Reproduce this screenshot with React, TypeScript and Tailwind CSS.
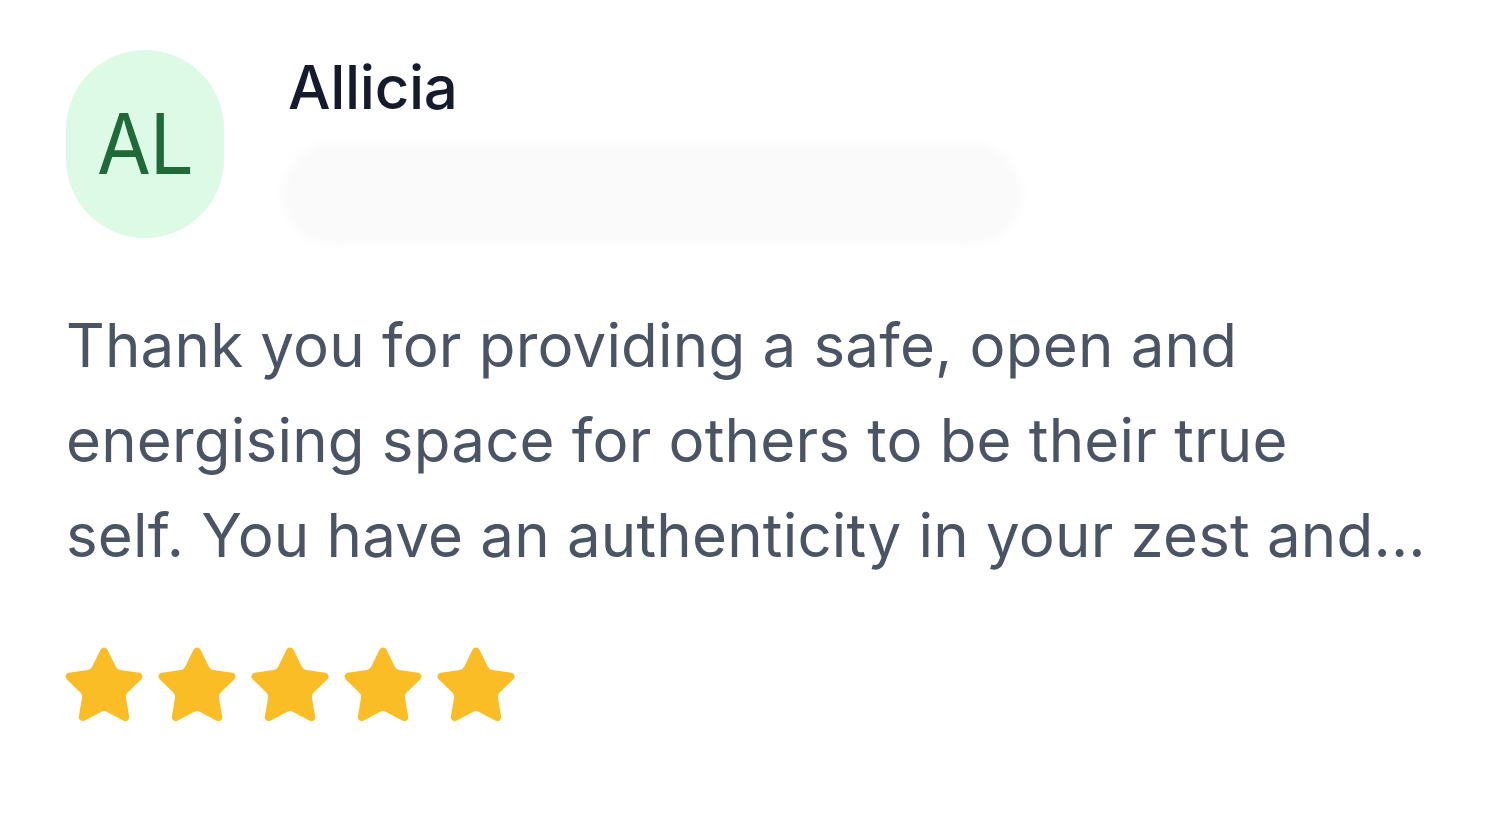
import React from 'react';
import { Star } from 'lucide-react';

export default function App() {
  return (
    <main className="w-full h-[821px] bg-white overflow-hidden font-['Inter',sans-serif]">
      <div className="pl-[66px] pt-[50px]">
        {/* Header */}
        <div className="flex items-start gap-[64px]">
          <div className="w-[158px] h-[188px] rounded-full bg-[#dcfae5] flex items-center justify-center flex-shrink-0">
            <span className="text-[#1f6a38] text-[78px] font-normal tracking-[-1px] scale-y-[1.08] leading-none">AL</span>
          </div>
          <div className="relative pt-[2px]">
            <h3 className="text-[#151a2d] text-[60px] font-medium leading-[70px] tracking-[-0.3px]">Allicia</h3>
            <div className="mt-[22px] ml-[-6px] w-[740px] h-[100px] rounded-[50px] bg-[#fafafa] blur-[4px]" />
          </div>
        </div>

        {/* Review */}
        <p className="mt-[54px] text-[#4a5464] text-[60px] leading-[95px] tracking-[0.2px]">
          Thank you for providing a safe, open and
          <br />
          energising space for others to be their true
          <br />
          self. You have an authenticity in your zest and...
        </p>

        {/* Rating */}
        <div className="mt-[59px] ml-[-6px] flex gap-[5px]">
          {[0, 1, 2, 3, 4].map((i) => (
            <Star key={i} size={88} strokeWidth={1} className="text-[#fbbd26] fill-[#fbbd26]" />
          ))}
        </div>
      </div>
    </main>
  );
}
